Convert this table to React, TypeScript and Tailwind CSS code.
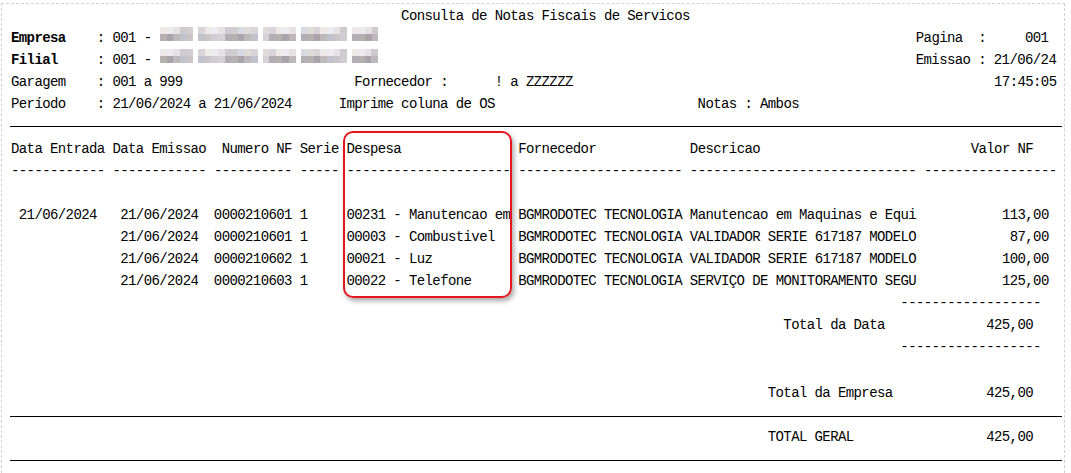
import React from 'react';

type Seg = { c: number; t?: string; b?: boolean; mosaic?: boolean };

const TOP = ['#e6e2e4', '#d8d4da', '#d2cdcf', '#ecebf1', '#dfdbd9', '#cdcad2', '#eee9e7', '#d7dae4'];
const BOTTOM = ['#bfb8ba', '#b2aeb5', '#cbc5c7', '#a9a4ab', '#d6d1d7', '#c2c2ce', '#b7b0b0', '#d0ccd4'];

// blurred company name, cells per word
const GROUPS = [5, 9, 5, 7, 4];

function Mosaic({ seed }: { seed: number }) {
  let n = 0;
  return (
    <span className="inline-flex h-[14px] w-[226px] gap-[5px] pl-px align-top">
      {GROUPS.map((cells, g) => (
        <span key={g} className="flex flex-col">
          {[TOP, BOTTOM].map((pal, r) => (
            <span key={r} className="flex">
              {Array.from({ length: cells }).map((_, i) => {
                n++;
                const color = pal[(n * 5 + seed * 3 + r * 7 + g) % pal.length];
                return <span key={i} className="block h-[7px] w-[6.6px]" style={{ backgroundColor: color }} />;
              })}
            </span>
          ))}
        </span>
      ))}
    </span>
  );
}

function Row({ segs }: { segs: Seg[] }) {
  let cur = 0;
  const out: React.ReactNode[] = [];
  segs.forEach((s, i) => {
    if (s.c > cur) {
      out.push(' '.repeat(s.c - cur));
      cur = s.c;
    }
    if (s.mosaic) {
      out.push(<Mosaic key={i} seed={i + (s.c % 3)} />);
      cur += 29;
    } else {
      out.push(
        s.b ? (
          <b key={i} className="font-bold">
            {s.t}
          </b>
        ) : (
          <span key={i}>{s.t}</span>
        ),
      );
      cur += (s.t || '').length;
    }
  });
  return <div className="h-[22px] whitespace-pre pl-[9px] leading-[22px]">{out}</div>;
}

function Rule({ h }: { h: string }) {
  return (
    <div className={`flex items-center pl-[8px] pr-[2px] ${h}`}>
      <div className="h-px flex-1 bg-black" />
    </div>
  );
}

const dash = (n: number) => '-'.repeat(n);

const ROWS = [
  ['21/06/2024', '0000210601', '00231 - Manutencao em', 'Manutencao em Maquinas e Equi', '113,00'],
  ['21/06/2024', '0000210601', '00003 - Combustivel', 'VALIDADOR SERIE 617187 MODELO', '87,00'],
  ['21/06/2024', '0000210602', '00021 - Luz', 'VALIDADOR SERIE 617187 MODELO', '100,00'],
  ['21/06/2024', '0000210603', '00022 - Telefone', 'SERVIÇO DE MONITORAMENTO SEGU', '125,00'],
];

export default function App() {
  return (
    <div className="relative min-h-[473px] bg-white pl-px pt-[3px] font-['Liberation_Mono','Courier_New',monospace] text-[14px] tracking-[-0.6px] text-black">
      <div className="flex min-h-[470px] w-[1064px] flex-col border-x border-t border-dashed border-[#d2d2d2] pt-px">
        <Row segs={[{ c: 50, t: 'Consulta de Notas Fiscais de Servicos' }]} />
        <Row
          segs={[
            { c: 0, t: 'Empresa', b: true },
            { c: 11, t: ': 001 -' },
            { c: 19, mosaic: true },
            { c: 116, t: 'Pagina  :     001' },
          ]}
        />
        <Row
          segs={[
            { c: 0, t: 'Filial', b: true },
            { c: 11, t: ': 001 -' },
            { c: 19, mosaic: true },
            { c: 116, t: 'Emissao : 21/06/24' },
          ]}
        />
        <Row
          segs={[
            { c: 0, t: 'Garagem' },
            { c: 11, t: ': 001 a 999' },
            { c: 44, t: 'Fornecedor :      ! a ZZZZZZ' },
            { c: 126, t: '17:45:05' },
          ]}
        />
        <Row
          segs={[
            { c: 0, t: 'Período' },
            { c: 11, t: ': 21/06/2024 a 21/06/2024' },
            { c: 42, t: 'Imprime coluna de OS' },
            { c: 88, t: 'Notas : Ambos' },
          ]}
        />

        <Rule h="h-[23px]" />

        <Row
          segs={[
            { c: 0, t: 'Data Entrada' },
            { c: 13, t: 'Data Emissao' },
            { c: 27, t: 'Numero NF' },
            { c: 37, t: 'Serie' },
            { c: 43, t: 'Despesa' },
            { c: 65, t: 'Fornecedor' },
            { c: 87, t: 'Descricao' },
            { c: 123, t: 'Valor NF' },
          ]}
        />
        <Row
          segs={[
            { c: 0, t: dash(12) },
            { c: 13, t: dash(12) },
            { c: 26, t: dash(10) },
            { c: 37, t: dash(5) },
            { c: 43, t: dash(21) },
            { c: 65, t: dash(21) },
            { c: 87, t: dash(29) },
            { c: 117, t: dash(17) },
          ]}
        />
        <Row segs={[]} />
        {ROWS.map(([date, nf, despesa, desc, valor], i) => (
          <Row
            key={nf + i}
            segs={[
              ...(i === 0 ? [{ c: 1, t: date }] : []),
              { c: 14, t: date },
              { c: 26, t: nf },
              { c: 37, t: '1' },
              { c: 43, t: despesa },
              { c: 65, t: 'BGMRODOTEC TECNOLOGIA' },
              { c: 87, t: desc },
              { c: 133 - valor.length, t: valor },
            ]}
          />
        ))}
        <Row segs={[{ c: 114, t: dash(18) }]} />
        <Row
          segs={[
            { c: 99, t: 'Total da Data' },
            { c: 125, t: '425,00' },
          ]}
        />
        <Row segs={[{ c: 114, t: dash(18) }]} />
        <div className="h-[24px]" />
        <Row
          segs={[
            { c: 97, t: 'Total da Empresa' },
            { c: 125, t: '425,00' },
          ]}
        />

        <Rule h="h-[22px] pt-[2px]" />

        <Row
          segs={[
            { c: 97, t: 'TOTAL GERAL' },
            { c: 125, t: '425,00' },
          ]}
        />

        <Rule h="h-[24px]" />
      </div>

      {/* highlight around the Despesa column */}
      <div className="absolute left-[343px] top-[131px] h-[167px] w-[169px] rounded-[10px] border-2 border-[#e5161d] shadow-[2px_3px_5px_rgba(0,0,0,0.35)]" />
    </div>
  );
}
